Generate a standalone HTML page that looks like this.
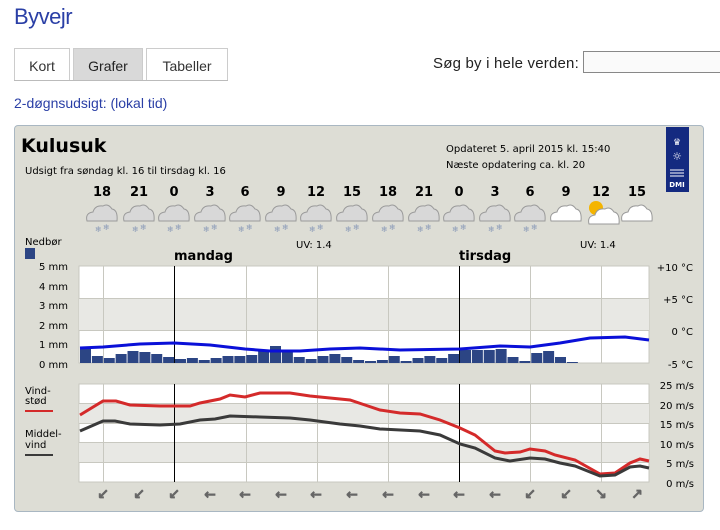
<!DOCTYPE html>
<html><head><meta charset="utf-8"><style>
body{margin:0;width:720px;height:530px;background:#fff;font-family:"Liberation Sans",sans-serif;position:relative;overflow:hidden}
.a{position:absolute}
h1{position:absolute;left:14px;top:4px;margin:0;font-weight:normal;font-size:22px;color:#2a3fa6;letter-spacing:-0.5px}
.tab{position:absolute;top:48px;height:32px;border:1px solid #ccc;border-bottom:none;background:#fff;font-size:14px;color:#333;text-align:center;line-height:34px;box-sizing:border-box}
</style></head><body>
<h1>Byvejr</h1>
<div class="a" style="left:14px;top:80px;width:214px;height:1px;background:#bbb"></div>
<div class="tab" style="left:14px;width:56px">Kort</div>
<div class="tab" style="left:73px;width:70px;background:#d9d9d9;color:#222">Grafer</div>
<div class="tab" style="left:146px;width:82px">Tabeller</div>
<div class="a" style="left:433px;top:55px;font-size:15px;color:#222;letter-spacing:0.2px">Søg by i hele verden:</div>
<div class="a" style="left:583px;top:51px;width:140px;height:22px;border:1px solid #888;border-right:none;box-sizing:border-box;background:#fafafa"></div>
<div class="a" style="left:14px;top:95px;font-size:14px;color:#2a3fa6">2-døgnsudsigt: (lokal tid)</div>
<div class="a" style="left:14px;top:125px;width:690px;height:387px;background:#ddddd5;border:1px solid #a9b7c2;border-radius:4px;box-sizing:border-box"></div>
<svg class="a" style="left:0;top:0" width="720" height="530" xmlns="http://www.w3.org/2000/svg" font-family="DejaVu Sans, sans-serif">
<defs>
<g id="cl"><path d="M-15 8 Q-17 0 -9 -1 Q-7 -8 1 -7 Q6 -10 10 -4 Q16 -3 15 8 Z" fill="#d8d8d8" stroke="#9a9a9a" stroke-width="1"/><g fill="#8a9ab8" font-size="8"><text x="-7" y="19">❄</text><text x="1" y="17">❄</text></g></g>
<g id="wc"><path d="M-15 8 Q-17 0 -9 -1 Q-7 -8 1 -7 Q6 -10 10 -4 Q16 -3 15 8 Z" fill="#fff" stroke="#999" stroke-width="1"/></g>
</defs>
<text x="21" y="152" font-size="19" font-weight="bold" fill="#000">Kulusuk</text>
<text x="25" y="174" font-size="10" fill="#000">Udsigt fra søndag kl. 16 til tirsdag kl. 16</text>
<text x="446" y="152" font-size="10" fill="#000">Opdateret 5. april 2015 kl. 15:40</text>
<text x="446" y="168" font-size="10" fill="#000">Næste opdatering ca. kl. 20</text>
<rect x="666" y="127" width="23" height="65" fill="#142a80"/>
<text x="677" y="145" font-size="9" fill="#fff" text-anchor="middle">♛</text>
<text x="677" y="160" font-size="11" fill="#fff" text-anchor="middle">☼</text>
<path d="M670 170h14M670 173h14M670 176h14" stroke="#fff" stroke-width="1"/>
<text x="677" y="187" font-size="7" font-weight="bold" fill="#fff" text-anchor="middle">DMI</text>
<g font-size="13" font-weight="bold" text-anchor="middle" fill="#000">
<text x="102" y="196">18</text><text x="139" y="196">21</text><text x="174" y="196">0</text><text x="210" y="196">3</text><text x="245" y="196">6</text><text x="281" y="196">9</text><text x="316" y="196">12</text><text x="352" y="196">15</text><text x="388" y="196">18</text><text x="424" y="196">21</text><text x="459" y="196">0</text><text x="495" y="196">3</text><text x="530" y="196">6</text><text x="566" y="196">9</text><text x="601" y="196">12</text><text x="637" y="196">15</text></g>
<use href="#cl" x="102" y="213"/><use href="#cl" x="139" y="213"/><use href="#cl" x="174" y="213"/><use href="#cl" x="210" y="213"/><use href="#cl" x="245" y="213"/><use href="#cl" x="281" y="213"/><use href="#cl" x="316" y="213"/><use href="#cl" x="352" y="213"/><use href="#cl" x="388" y="213"/><use href="#cl" x="424" y="213"/><use href="#cl" x="459" y="213"/><use href="#cl" x="495" y="213"/><use href="#cl" x="530" y="213"/>
<use href="#wc" x="566" y="213"/><circle cx="596" cy="208" r="7" fill="#f4b400"/><use href="#wc" x="604" y="216"/><use href="#wc" x="637" y="213"/>
<text x="25" y="245" font-size="10">Nedbør</text>
<rect x="25" y="248" width="10" height="11" fill="#2c4584"/>
<text x="296" y="248" font-size="10">UV: 1.4</text><text x="580" y="248" font-size="10">UV: 1.4</text>
<text x="174" y="260" font-size="13" font-weight="bold">mandag</text>
<text x="459" y="260" font-size="13" font-weight="bold">tirsdag</text>
<rect x="79" y="266" width="570" height="97" fill="#fff" stroke="#c8c8c0"/>
<rect x="79" y="298" width="570" height="33" fill="#e8e8e4"/>
<rect x="79" y="384" width="570" height="98" fill="#fff" stroke="#c8c8c0"/>
<rect x="79" y="404" width="570" height="19" fill="#e8e8e4"/>
<rect x="79" y="443" width="570" height="19" fill="#e8e8e4"/>
<g stroke="#c8c8c0" stroke-width="1">
<path d="M79 298.5h570M79 330.5h570M79 403.5h570M79 423.5h570M79 442.5h570M79 462.5h570"/>
<path d="M103.5 266v97M246.5 266v97M317.5 266v97M388.5 266v97M530.5 266v97M601.5 266v97M103.5 384v98M246.5 384v98M317.5 384v98M388.5 384v98M530.5 384v98M601.5 384v98"/>
</g>
<path d="M174.5 266v97M459.5 266v97M174.5 384v98M459.5 384v98" stroke="#000"/>
<g fill="#2c4584" id="bars"></g>
<path d="M80 348 L103 347 L140 344 L174 343 L210 345 L245 349 L270 351 L300 351 L330 349 L360 348 L400 350 L460 349 L500 346 L530 347 L560 343 L590 338 L625 337 L649 340" fill="none" stroke="#0a10d8" stroke-width="3"/>
<path d="M80 415 L103 401 L116 401 L130 405 L160 406 L190 406 L200 403 L220 399 L230 395 L245 397 L260 393 L290 393 L310 396 L330 398 L350 400 L365 405 L380 410 L400 413 L420 414 L440 420 L460 428 L475 435 L495 451 L505 453 L520 452 L530 449 L545 451 L555 455 L575 460 L600 474 L615 473 L630 463 L640 459 L649 461" fill="none" stroke="#d42a2a" stroke-width="3"/>
<path d="M80 431 L103 421 L115 421 L130 424 L160 425 L180 424 L200 420 L215 419 L230 416 L260 417 L290 418 L310 420 L340 424 L360 426 L380 429 L420 431 L440 435 L460 444 L475 448 L495 458 L510 461 L530 458 L545 459 L560 463 L575 466 L600 476 L615 475 L630 467 L640 466 L649 468" fill="none" stroke="#3a3a3a" stroke-width="3"/>
<g font-size="10" text-anchor="end" fill="#000">
<text x="68" y="270">5 mm</text><text x="68" y="290">4 mm</text><text x="68" y="309">3 mm</text><text x="68" y="329">2 mm</text><text x="68" y="348">1 mm</text><text x="68" y="368">0 mm</text>
<text x="693" y="271">+10 °C</text><text x="693" y="303">+5 °C</text><text x="693" y="335">0 °C</text><text x="693" y="368">-5 °C</text>
<text x="694" y="389">25 m/s</text><text x="694" y="409">20 m/s</text><text x="694" y="428">15 m/s</text><text x="694" y="448">10 m/s</text><text x="694" y="467">5 m/s</text><text x="694" y="487">0 m/s</text></g>
<text x="25" y="394" font-size="10">Vind-</text><text x="25" y="404" font-size="10">stød</text>
<path d="M25 411h28" stroke="#d42a2a" stroke-width="2"/>
<text x="25" y="437" font-size="10">Middel-</text><text x="25" y="448" font-size="10">vind</text>
<path d="M25 455h28" stroke="#3a3a3a" stroke-width="2"/>
<g font-size="14" font-weight="bold" fill="#666" stroke="#666" stroke-width="0.6" text-anchor="middle">
<text x="103" y="499">↙</text><text x="139" y="499">↙</text><text x="174" y="499">↙</text><text x="210" y="499">←</text><text x="245" y="499">←</text><text x="281" y="499">←</text><text x="316" y="499">←</text><text x="352" y="499">←</text><text x="388" y="499">←</text><text x="424" y="499">←</text><text x="459" y="499">←</text><text x="495" y="499">←</text><text x="530" y="499">↙</text><text x="566" y="499">↙</text><text x="601" y="499">↘</text><text x="637" y="499">↗</text></g>
</svg>
<script>
var h=[14,7,5,9,12,11,9,6,4,5,3,5,7,7,8,12,17,12,6,4,7,9,6,3,2,3,7,2,5,7,5,9,13,13,13,14,6,2,10,12,6,1,0,0,0,0,0,0];
var g=document.getElementById('bars');
for(var i=0;i<h.length;i++){if(h[i]>0){var r=document.createElementNS('http://www.w3.org/2000/svg','rect');r.setAttribute('x',80+i*11.875);r.setAttribute('y',363-h[i]);r.setAttribute('width',11);r.setAttribute('height',h[i]);g.appendChild(r);}}
</script>
</body></html>
